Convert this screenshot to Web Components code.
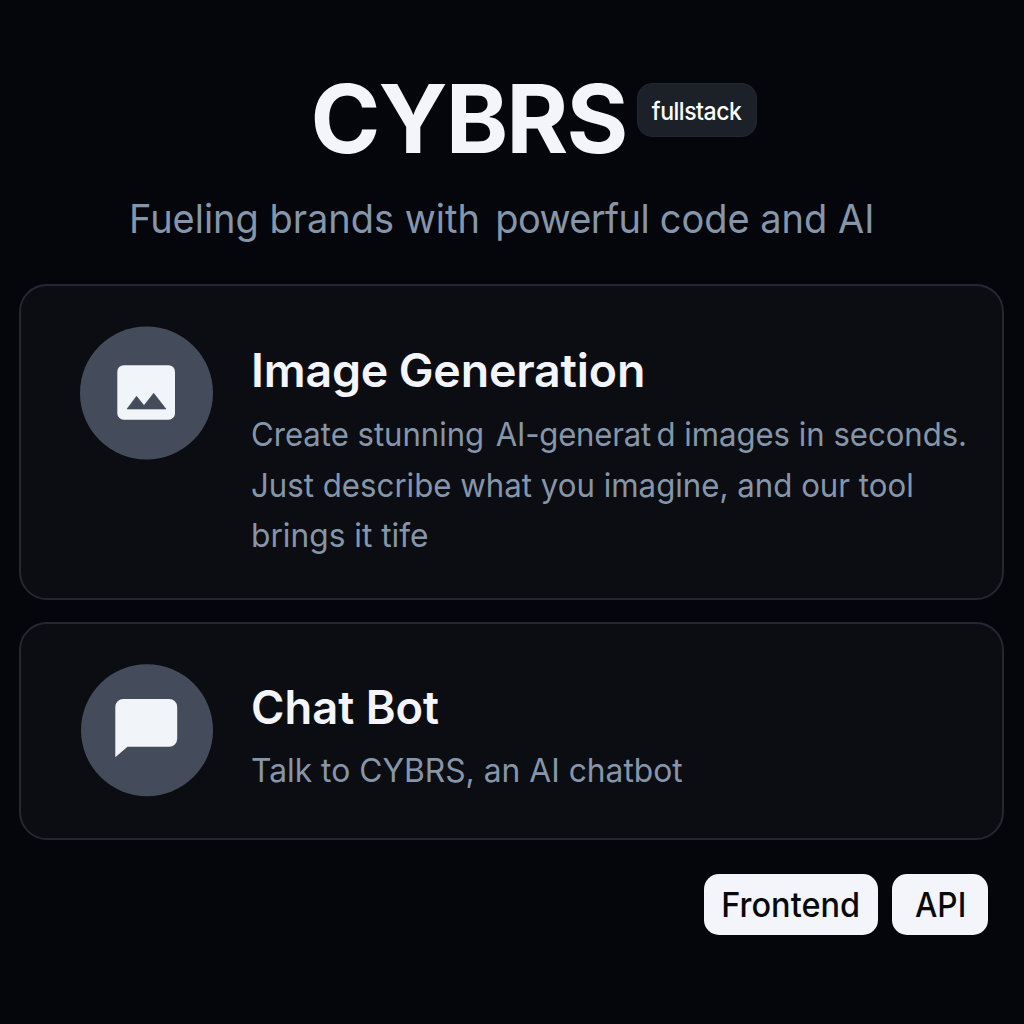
<!DOCTYPE html>
<html lang="en"><head><meta charset="utf-8"><title>CYBRS</title>
<style>
html,body{margin:0;height:100%}
body{background:#04060b;font-family:Inter,"Liberation Sans",sans-serif;color:#f3f5fa}
</style></head><body>
<cybrs-page></cybrs-page>
<script>
const define=(name,html)=>customElements.define(name,class extends HTMLElement{
  constructor(){super();this.attachShadow({mode:'open'}).innerHTML=html}
});
// One line of text, condensed horizontally by --sx.
define('text-line',`<style>:host{display:block;white-space:nowrap;transform:scaleX(var(--sx,1));transform-origin:var(--origin,left) center}</style><slot></slot>`);
define('cybrs-badge',`<style>:host{display:flex;align-items:center;justify-content:center;box-sizing:border-box;width:120px;height:54px;margin-top:15px;border-radius:15px;background:#1c2028;border:1px solid #22262e;color:#fff;font-size:24.5px;font-weight:500;letter-spacing:-.5px;--sx:.94;--origin:center;padding-top:1px}</style><text-line><slot></slot></text-line>`);
define('cybrs-header',`<style>
:host{display:flex;flex-direction:column}
.brand{display:flex;align-items:flex-start;padding-left:310.5px;height:100px}
h1{margin:1px 0 0;font-size:94.5px;line-height:100px;font-weight:700;letter-spacing:-1.9px;width:326.5px;white-space:nowrap}
p{margin:26px 0 0 129.2px;font-size:40px;line-height:50px;color:#8696aa;--sx:.949}
</style><div class="brand"><h1><slot name="title"></slot></h1><slot name="badge"></slot></div><p><text-line><slot name="tagline"></slot></text-line></p>`);
define('image-icon',`<style>:host,svg{display:block}</style><svg width="133" height="134" viewBox="0 0 133 134"><circle cx="66.5" cy="67" r="66.5" fill="#444c5b"/><rect x="37.3" y="39.2" width="57.7" height="54.5" rx="6.5" fill="#f1f5fa"/><path d="M47 83 56.5 70.2 64 79.5 73.7 67.2 86 83Z" fill="#444c5b" stroke="#444c5b" stroke-width=".6" stroke-linejoin="round"/></svg>`);
define('chat-icon',`<style>:host,svg{display:block}</style><svg width="133" height="133" viewBox="0 0 133 133"><circle cx="67" cy="66.2" r="66" fill="#444c5b"/><path d="M35.3 93.3V43a8 8 0 0 1 8-8H89.2a8 8 0 0 1 8 8V74.8a8 8 0 0 1-8 8H47.5Z" fill="#f1f5fa"/></svg>`);
define('feature-card',`<style>
:host{display:flex;box-sizing:border-box;border:2px solid #252732;border-radius:28px;background:#0c0d12;padding:40px 0 0 59px;gap:38px;align-items:flex-start}
.text{padding-top:var(--top,15px);width:720px}
h2{margin:0 0 var(--gap,11px);font-size:46.5px;line-height:56px;font-weight:600;white-space:nowrap}
.body{font-size:33px;line-height:50.5px;color:#8696aa}
</style><slot name="icon"></slot><div class="text"><h2><slot name="title"></slot></h2><div class="body"><slot></slot></div></div>`);
define('tech-tag',`<style>:host{display:flex;align-items:center;justify-content:center;box-sizing:border-box;height:61px;border-radius:15px;background:#f3f5fa;color:#08090c;font-size:34px;font-weight:500;--origin:center}</style><text-line><slot></slot></text-line>`);
define('cybrs-page',`<style>
:host{display:flex;flex-direction:column;box-sizing:border-box;width:1024px;height:1024px;padding:68px 20px 0 19px;overflow:hidden}
cybrs-header{margin:0 -20px 40px -19px}
.one{height:316px;margin-bottom:22px;--top:16px}.two{height:218px;--top:15px;--gap:10px}
.gap{word-spacing:-3.5px}
.powerful{margin-left:5px;letter-spacing:-.6px}
.ai{margin-left:3px;letter-spacing:-.2px}
footer{display:flex;justify-content:flex-end;gap:14px;padding:34px 16px 0 0}
</style>
<cybrs-header><span slot="title">CYBRS</span><cybrs-badge slot="badge">fullstack</cybrs-badge><span slot="tagline">Fueling brands with <span class="powerful">powerful</span> code and AI</span></cybrs-header>
<feature-card class="one"><image-icon slot="icon"></image-icon><text-line slot="title" style="letter-spacing:-.18px;word-spacing:-1px">Image Generation</text-line><text-line style="--sx:.942">Create stunning <span class="ai">AI-generat</span><span class="gap"> </span>d images in seconds.</text-line><text-line style="--sx:.946">Just describe what you imagine, and our tool</text-line><text-line style="--sx:.96">brings it tife</text-line></feature-card>
<feature-card class="two"><chat-icon slot="icon"></chat-icon><text-line slot="title" style="--sx:.975">Chat Bot</text-line><text-line style="--sx:.963">Talk to CYBRS, an AI chatbot</text-line></feature-card>
<footer><tech-tag style="width:174px;--sx:.955;padding-left:1px">Frontend</tech-tag><tech-tag style="width:96.5px;--sx:.93;padding-left:2px">API</tech-tag></footer>`);
</script></body></html>
